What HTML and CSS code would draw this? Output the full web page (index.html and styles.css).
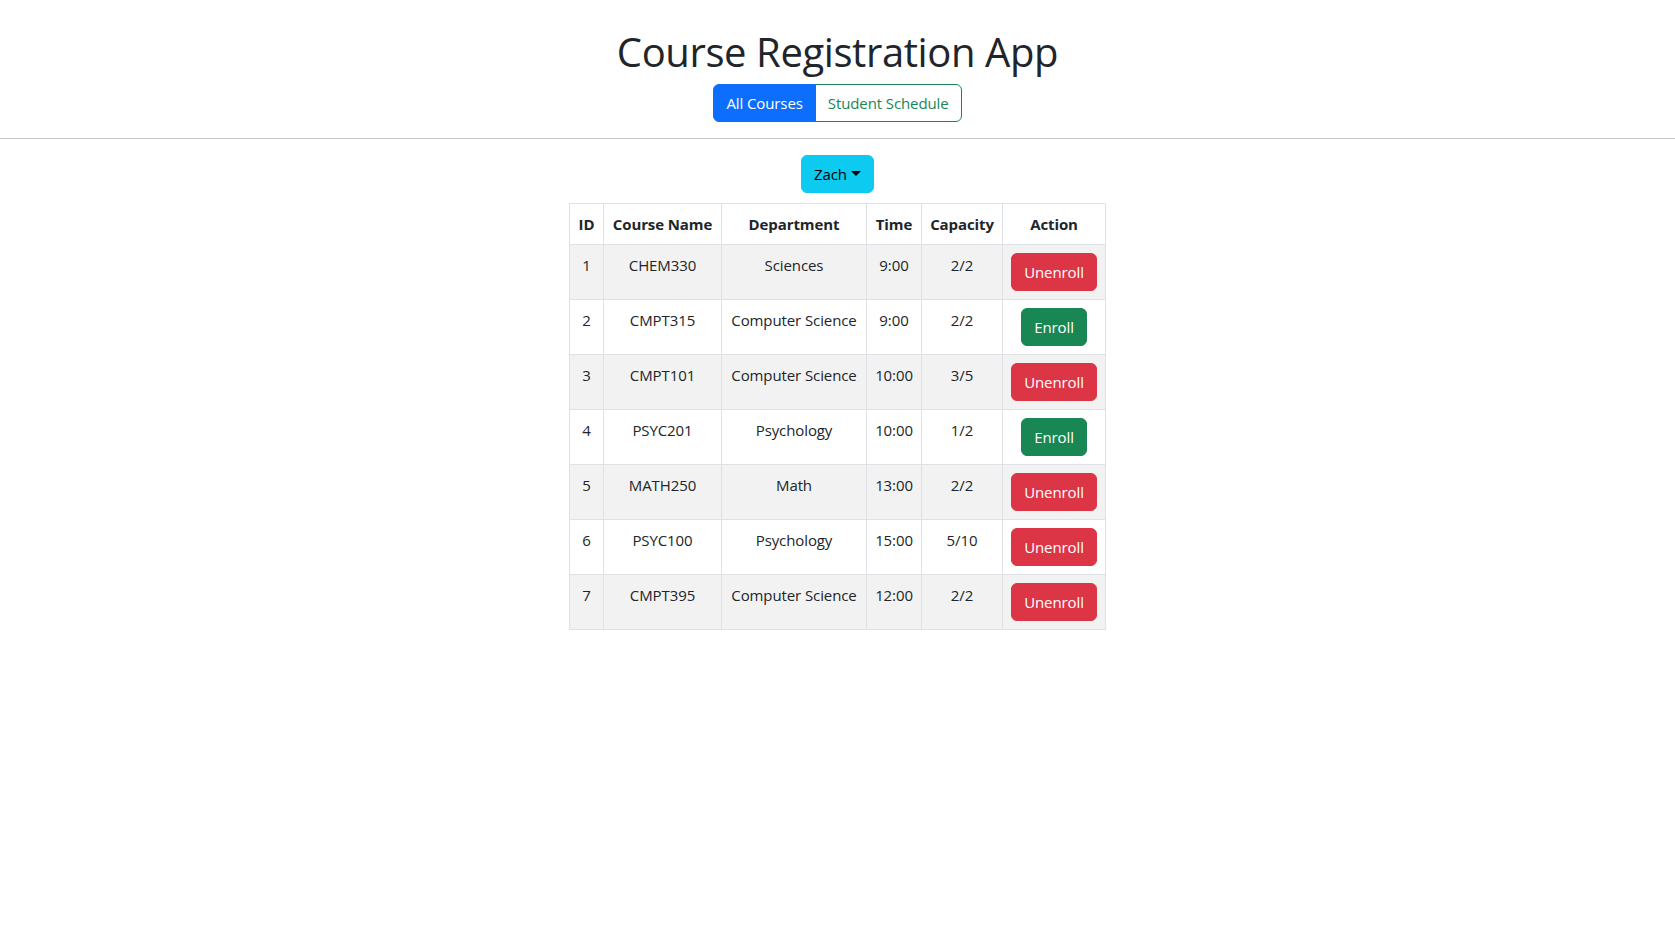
FILE: index.html
```html
<!DOCTYPE html>
<html lang="en">
<head>
<meta charset="utf-8">
<title>Course Registration App</title>
<link rel="stylesheet" href="styles.css">
</head>
<body>
<div class="app">
  <header class="header">
    <h1 class="title">Course Registration App</h1>
    <div class="btn-group">
      <button class="btn btn-primary grp-first">All Courses</button>
      <button class="btn btn-outline-success grp-last">Student Schedule</button>
    </div>
  </header>
  <hr class="divider">
  <main class="content">
    <div class="dropdown">
      <button class="btn btn-info dropdown-toggle">Zach</button>
    </div>
    <table class="courses">
      <colgroup>
        <col class="c-id"><col class="c-name"><col class="c-dept"><col class="c-time"><col class="c-cap"><col class="c-act">
      </colgroup>
      <thead>
        <tr><th>ID</th><th>Course Name</th><th>Department</th><th>Time</th><th>Capacity</th><th>Action</th></tr>
      </thead>
      <tbody>
        <tr><td>1</td><td>CHEM330</td><td>Sciences</td><td>9:00</td><td>2/2</td><td><button class="btn btn-danger">Unenroll</button></td></tr>
        <tr><td>2</td><td>CMPT315</td><td>Computer Science</td><td>9:00</td><td>2/2</td><td><button class="btn btn-success">Enroll</button></td></tr>
        <tr><td>3</td><td>CMPT101</td><td>Computer Science</td><td>10:00</td><td>3/5</td><td><button class="btn btn-danger">Unenroll</button></td></tr>
        <tr><td>4</td><td>PSYC201</td><td>Psychology</td><td>10:00</td><td>1/2</td><td><button class="btn btn-success">Enroll</button></td></tr>
        <tr><td>5</td><td>MATH250</td><td>Math</td><td>13:00</td><td>2/2</td><td><button class="btn btn-danger">Unenroll</button></td></tr>
        <tr><td>6</td><td>PSYC100</td><td>Psychology</td><td>15:00</td><td>5/10</td><td><button class="btn btn-danger">Unenroll</button></td></tr>
        <tr><td>7</td><td>CMPT395</td><td>Computer Science</td><td>12:00</td><td>2/2</td><td><button class="btn btn-danger">Unenroll</button></td></tr>
      </tbody>
    </table>
  </main>
</div>
</body>
</html>
```

FILE: styles.css
```css
* { box-sizing: border-box; }

html, body {
  margin: 0;
  padding: 0;
  background: #fff;
}

body {
  font-family: "Open Sans", "Noto Sans", "Liberation Sans", sans-serif;
  font-size: 16px;
  line-height: 1.5;
  color: #212529;
}

.header {
  padding-top: 28px;
  display: flex;
  flex-direction: column;
  align-items: center;
}

.title {
  margin: 0 0 8px 0;
  font-size: 40px;
  font-weight: 500;
  line-height: 1.2;
  letter-spacing: -0.4px;
}

.btn {
  display: inline-block;
  font-family: inherit;
  font-size: 15px;
  line-height: 24px;
  padding: 6px 12px;
  border: 1px solid transparent;
  border-radius: 6px;
  cursor: pointer;
  text-align: center;
  white-space: nowrap;
  letter-spacing: -0.1px;
}

.btn-group {
  display: flex;
}

.grp-first { border-top-right-radius: 0; border-bottom-right-radius: 0; }
.grp-last { border-top-left-radius: 0; border-bottom-left-radius: 0; margin-left: -1px; }

.btn-primary { background: #0d6efd; border-color: #0d6efd; color: #fff; }
.btn-outline-success { background: #fff; border-color: #198754; color: #198754; }
.btn-info { background: #0dcaf0; border-color: #0dcaf0; color: #000; }
.btn-danger { background: #dc3545; border-color: #dc3545; color: #fff; }
.btn-success { background: #198754; border-color: #198754; color: #fff; }

.divider {
  margin: 16px 0;
  border: 0;
  border-top: 1px solid #212529;
  opacity: 0.25;
}

.content {
  display: flex;
  flex-direction: column;
  align-items: center;
}

.dropdown {
  margin-bottom: 10px;
}

.dropdown-toggle::after {
  content: "";
  display: inline-block;
  margin-left: 4px;
  vertical-align: 4px;
  border-top: 5px solid;
  border-right: 5px solid transparent;
  border-left: 5px solid transparent;
  border-bottom: 0;
}

.courses {
  border-collapse: collapse;
  table-layout: fixed;
  width: 536px;
  text-align: center;
  vertical-align: top;
  font-size: 15px;
  letter-spacing: -0.1px;
}

.c-id { width: 34px; }
.c-name { width: 118px; }
.c-dept { width: 145px; }
.c-time { width: 55px; }
.c-cap { width: 81px; }
.c-act { width: 103px; }

.courses th,
.courses td {
  border: 1px solid #dee2e6;
  padding: 8px 0;
  vertical-align: top;
  line-height: 24px;
  white-space: nowrap;
}

.courses th {
  font-weight: 700;
  font-size: 15px;
}

.courses tbody tr:nth-child(odd) td {
  background: #f2f2f2;
}
```
